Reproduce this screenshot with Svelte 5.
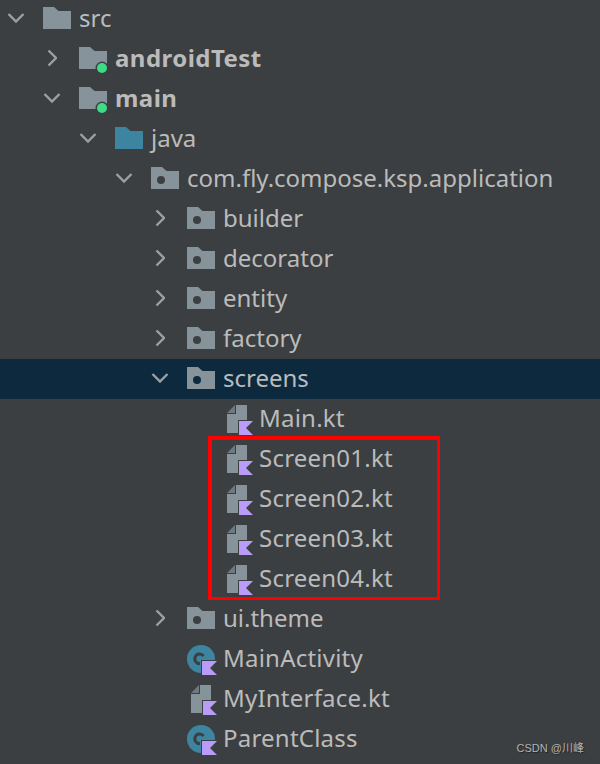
<script>
  const rows = [
    { d: 0, arrow: 'down', icon: 'folder', label: 'src' },
    { d: 1, arrow: 'right', icon: 'module', label: 'androidTest', bold: true },
    { d: 1, arrow: 'down', icon: 'module', label: 'main', bold: true },
    { d: 2, arrow: 'down', icon: 'source', label: 'java' },
    { d: 3, arrow: 'down', icon: 'package', label: 'com.fly.compose.ksp.application' },
    { d: 4, arrow: 'right', icon: 'package', label: 'builder' },
    { d: 4, arrow: 'right', icon: 'package', label: 'decorator' },
    { d: 4, arrow: 'right', icon: 'package', label: 'entity' },
    { d: 4, arrow: 'right', icon: 'package', label: 'factory' },
    { d: 4, arrow: 'down', icon: 'package', label: 'screens', selected: true },
    { d: 5, icon: 'ktfile', label: 'Main.kt' },
    { d: 5, icon: 'ktfile', label: 'Screen01.kt' },
    { d: 5, icon: 'ktfile', label: 'Screen02.kt' },
    { d: 5, icon: 'ktfile', label: 'Screen03.kt' },
    { d: 5, icon: 'ktfile', label: 'Screen04.kt' },
    { d: 4, arrow: 'right', icon: 'package', label: 'ui.theme' },
    { d: 4, icon: 'ktclass', label: 'MainActivity' },
    { d: 4, icon: 'ktfile', label: 'MyInterface.kt' },
    { d: 4, icon: 'ktclass', label: 'ParentClass' }
  ];
</script>

<div class="page">
  <div class="tree">
    {#each rows as r}
      <div class="row" class:selected={r.selected} style="padding-left:{r.d * 36}px">
        <span class="arrow">
          {#if r.arrow === 'down'}
            <svg width="18" height="10" viewBox="0 0 18 10"><path d="M1.5 1L9 8.5L16.5 1" /></svg>
          {:else if r.arrow === 'right'}
            <svg width="10" height="18" viewBox="0 0 10 18"><path d="M1.5 1.5L9 9L1.5 16.5" /></svg>
          {/if}
        </span>
        <svg class="icon" width="32" height="32" viewBox="0 0 32 32">
          {#if r.icon === 'folder' || r.icon === 'module' || r.icon === 'package' || r.icon === 'source'}
            <path d="M0 4H11L15.5 8H28V26H0Z" fill={r.icon === 'source' ? '#3d84a0' : '#87939a'} />
          {/if}
          {#if r.icon === 'package'}
            <circle cx="10" cy="17" r="4" fill="#3c3f41" class:on-selected={r.selected} />
          {/if}
          {#if r.icon === 'module'}
            <circle cx="23" cy="25" r="6.5" fill="#3c3f41" />
            <circle cx="23" cy="25" r="5" fill="#3ddc84" />
          {/if}
          {#if r.icon === 'ktfile'}
            <path d="M4 10L12 2V10Z" fill="#6f7a80" />
            <path d="M13 2H24V17H15V30H4V11H13Z" fill="#87939a" />
            <path d="M16 18H30L23 25L30 32H16Z" fill="#b99bf8" />
          {/if}
          {#if r.icon === 'ktclass'}
            <circle cx="14" cy="16" r="14" fill="#3d84a0" />
            <path d="M16.5 13A4.8 4.8 0 1 0 13 20.6" fill="none" stroke="#3c3f41" stroke-width="3" />
            <path d="M15 18H30L23 25L30 32H15Z" fill="#b99bf8" stroke="#3c3f41" stroke-width="2" paint-order="stroke" />
          {/if}
        </svg>
        <span class="label" class:bold={r.bold} class:file={r.icon === 'ktfile' || r.icon === 'ktclass'}>{r.label}</span>
      </div>
    {/each}
  </div>
  <div class="mark"></div>
  <span class="credit">CSDN @川峰</span>
</div>

<style>
  :global(body) {
    margin: 0;
    background: #3c3f41;
  }
  .page {
    position: relative;
    width: 600px;
    height: 764px;
    overflow: hidden;
    background: #3c3f41;
    font-family: "Noto Sans", "Open Sans", sans-serif;
  }
  .tree {
    margin-top: -1px;
  }
  .row {
    display: flex;
    align-items: center;
    height: 40px;
    color: #bbbbbb;
    font-size: 24px;
    white-space: nowrap;
  }
  .selected {
    background: #0d293e;
  }
  .arrow {
    display: flex;
    align-items: center;
    justify-content: center;
    width: 32px;
    margin-right: 11px;
    margin-bottom: 2px;
  }
  .arrow path {
    fill: none;
    stroke: #9da0a2;
    stroke-width: 2.4;
  }
  .icon {
    flex: none;
    margin-right: 4px;
  }
  .on-selected {
    fill: #0d293e;
  }
  .label {
    margin-bottom: 4px;
  }
  .file {
    letter-spacing: 0.22px;
  }
  .bold {
    font-weight: 700;
    letter-spacing: 0.45px;
  }
  .mark {
    position: absolute;
    left: 208px;
    top: 436px;
    width: 232px;
    height: 164px;
    box-sizing: border-box;
    border: solid #ff0000;
    border-width: 4px 3px 3px 4px;
  }
  .credit {
    position: absolute;
    right: 16px;
    bottom: 9px;
    color: #b4b4b4;
    font: 11px "Liberation Sans", "Noto Sans CJK SC", sans-serif;
    text-shadow: 1px 1px 1px #222;
  }
</style>
